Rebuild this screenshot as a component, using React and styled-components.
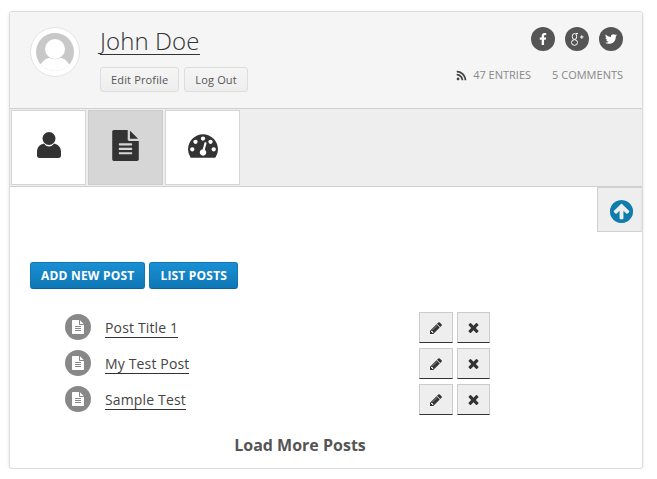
import React from "react";
import styled, { createGlobalStyle } from "styled-components";
import { FaFacebookF, FaTwitter, FaRss } from "react-icons/fa";

const ICONS = {
  file: "M1596 476q14 14 28 36h-472v-472q22 14 36 28zm-476 164h544v1056q0 40-28 68t-68 28h-1344q-40 0-68-28t-28-68v-1600q0-40 28-68t68-28h800v544q0 40 28 68t68 28zm160 736v-64q0-14-9-23t-23-9h-704q-14 0-23 9t-9 23v64q0 14 9 23t23 9h704q14 0 23-9t9-23zm0-256v-64q0-14-9-23t-23-9h-704q-14 0-23 9t-9 23v64q0 14 9 23t23 9h704q14 0 23-9t9-23zm0-256v-64q0-14-9-23t-23-9h-704q-14 0-23 9t-9 23v64q0 14 9 23t23 9h704q14 0 23-9t9-23z",
  gauge: "M384 1152q0-53-37.5-90.5t-90.5-37.5-90.5 37.5-37.5 90.5 37.5 90.5 90.5 37.5 90.5-37.5 37.5-90.5zm192-448q0-53-37.5-90.5t-90.5-37.5-90.5 37.5-37.5 90.5 37.5 90.5 90.5 37.5 90.5-37.5 37.5-90.5zm428 481l101-382q6-26-7.5-48.5t-38.5-29.5-48 6.5-30 39.5l-101 382q-60 5-107 43.5t-63 98.5q-20 77 20 146t117 89 146-20 89-117q16-60-6-117t-72-91zm660-33q0-53-37.5-90.5t-90.5-37.5-90.5 37.5-37.5 90.5 37.5 90.5 90.5 37.5 90.5-37.5 37.5-90.5zm-640-640q0-53-37.5-90.5t-90.5-37.5-90.5 37.5-37.5 90.5 37.5 90.5 90.5 37.5 90.5-37.5 37.5-90.5zm448 192q0-53-37.5-90.5t-90.5-37.5-90.5 37.5-37.5 90.5 37.5 90.5 90.5 37.5 90.5-37.5 37.5-90.5zm320 448q0 261-141 483-19 29-54 29h-1402q-35 0-54-29-141-221-141-483 0-182 71-348t191-286 286-191 348-71 348 71 286 191 191 286 71 348z",
  pencil: "M491 1536l91-91-235-235-91 91v107h128v128h107zm523-928q0-22-22-22-10 0-17 7l-542 542q-7 7-7 17 0 22 22 22 10 0 17-7l542-542q7-7 7-17zm-54-192l416 416-832 832h-416v-416zm683 96q0 53-37 90l-166 166-416-416 166-165q36-38 90-38 53 0 91 38l235 234q37 39 37 91z",
  times: "M1490 1322q0 40-28 68l-136 136q-28 28-68 28t-68-28l-294-294-294 294q-28 28-68 28t-68-28l-136-136q-28-28-28-68t28-68l294-294-294-294q-28-28-28-68t28-68l136-136q28-28 68-28t68 28l294 294 294-294q28-28 68-28t68 28l136 136q28 28 28 68t-28 68l-294 294 294 294q28 28 28 68z",
  up: "M1412 897q0-27-18-45l-362-362-91-91q-18-18-45-18t-45 18l-91 91-362 362q-18 18-18 45t18 45l91 91q18 18 45 18t45-18l189-189v502q0 26 19 45t45 19h128q26 0 45-19t19-45v-502l189 189q19 19 45 19t45-19l91-91q18-18 18-45zm252-1q0 209-103 385.5t-279.5 279.5-385.5 103-385.5-103-279.5-279.5-103-385.5 103-385.5 279.5-279.5 385.5-103 385.5 103 279.5 279.5 103 385.5z",
};

const Global = createGlobalStyle`
  html, body {
    margin: 0;
    background: #fff;
    font-family: "Open Sans", sans-serif;
    color: #444;
  }
`;

const Card = styled.div`
  width: 634px;
  height: 458px;
  margin: 11px 0 0 9px;
  box-sizing: border-box;
  border: 1px solid #dcdcdc;
  border-radius: 3px;
  box-shadow: 0 1px 3px rgba(0, 0, 0, 0.12);
  overflow: hidden;
`;

const Header = styled.header`
  height: 97px;
  box-sizing: border-box;
  background: #f5f5f5;
  border-bottom: 1px solid #d0d0d0;
  padding: 15px 19px 0 20px;
  display: flex;
`;

const Avatar = styled.svg`
  width: 50px;
  height: 50px;
  margin-right: 20px;
  flex: none;
`;

const Identity = styled.div`
  display: flex;
  flex-direction: column;
  align-items: flex-start;
`;

const Name = styled.h1`
  margin: 0;
  font-size: 24px;
  font-weight: 300;
  line-height: 27px;
  letter-spacing: 0.1px;
  color: #333;
  border-bottom: 1px solid #333;
`;

const ProfileButtons = styled.div`
  display: flex;
  gap: 5px;
  margin-top: 12px;
`;

const ProfileButton = styled.button`
  height: 25px;
  padding: 0 10px;
  font: 400 11px "Open Sans", sans-serif;
  letter-spacing: 0.15px;
  color: #555;
  background: linear-gradient(#f5f5f5, #eee);
  border: 1px solid #ddd;
  border-radius: 3px;
`;

const Meta = styled.div`
  margin-left: auto;
  display: flex;
  flex-direction: column;
  align-items: flex-end;
`;

const Socials = styled.div`
  display: flex;
  gap: 10px;
`;

const Social = styled.span`
  width: 24px;
  height: 24px;
  border-radius: 50%;
  background: #555;
  color: #fff;
  display: flex;
  align-items: center;
  justify-content: center;
  font-size: 12px;
`;

const GooglePlus = styled.svg`
  width: 15px;
  height: 15px;
  fill: none;
  stroke: #fff;
  stroke-width: 1;
`;

const Stats = styled.div`
  display: flex;
  gap: 21px;
  margin-top: 17px;
  font-size: 11px;
  line-height: 14px;
  color: #888;
`;

const Stat = styled.span`
  display: flex;
  align-items: center;
  gap: 6px;
  svg {
    color: #444;
    font-size: 11px;
  }
`;

const TabBar = styled.nav`
  height: 78px;
  box-sizing: border-box;
  background: #eee;
  border-bottom: 1px solid #d0d0d0;
  padding: 1px 0 0 1px;
  display: flex;
  gap: 2px;
`;

const Tab = styled.div`
  width: 75px;
  height: 75px;
  box-sizing: border-box;
  padding-bottom: 5px;
  border: 1px solid ${(p) => (p.$active ? "#ccc" : "#d5d5d5")};
  background: ${(p) => (p.$active ? "#d6d6d6" : "#fff")};
  display: flex;
  align-items: center;
  justify-content: center;
`;

const Glyph = styled.svg`
  width: ${(p) => p.$size}px;
  height: ${(p) => p.$size}px;
  fill: ${(p) => p.$color || "#333"};
  display: block;
`;

const UserGlyph = styled.svg`
  width: 24px;
  height: 26px;
  fill: #333;
  display: block;
`;

const Content = styled.main`
  display: flex;
  flex-direction: column;
`;

const TopRow = styled.div`
  display: flex;
  justify-content: flex-end;
`;

const TopButton = styled.button`
  width: 45px;
  height: 45px;
  padding: 4px 0 0 3px;
  background: #eee;
  border: 1px solid #d0d0d0;
  border-right-color: #e4e4e4;
  display: flex;
  align-items: center;
  justify-content: center;
`;

const Actions = styled.div`
  display: flex;
  gap: 4px;
  margin: 30px 0 0 20px;
`;

const PrimaryButton = styled.button`
  height: 27px;
  padding: 0 10px;
  font: 700 12px "Open Sans", sans-serif;
  letter-spacing: 0.2px;
  color: #fff;
  background: linear-gradient(#1a8fd4, #0f77b5);
  border: 1px solid #0f77b5;
  border-bottom-color: #0b639a;
  border-radius: 3px;
`;

const PostList = styled.ul`
  list-style: none;
  width: 425px;
  margin: 22px 0 0 55px;
  padding: 0;
  display: flex;
  flex-direction: column;
  gap: 4px;
`;

const PostRow = styled.li`
  height: 32px;
  display: flex;
  align-items: center;
`;

const PostIcon = styled.span`
  width: 26px;
  height: 26px;
  border-radius: 50%;
  background: #888;
  display: flex;
  align-items: center;
  justify-content: center;
  margin-right: 14px;
`;

const PostTitle = styled.a`
  margin-top: 2px;
  font-size: 14px;
  line-height: 18px;
  letter-spacing: 0.15px;
  color: #444;
  border-bottom: 1px solid #333;
`;

const RowTools = styled.div`
  margin-left: auto;
  align-self: flex-end;
  display: flex;
  gap: 4px;
`;

const ToolButton = styled.button`
  width: ${(p) => p.$width}px;
  height: 31px;
  padding: 0;
  background: #eee;
  border: 1px solid #ccc;
  border-bottom: 1px solid #333;
  display: flex;
  align-items: center;
  justify-content: center;
`;

const LoadMore = styled.div`
  width: 540px;
  margin: 19px 0 0 20px;
  text-align: center;
  font-size: 16px;
  font-weight: 700;
  line-height: 22px;
  color: #555;
`;

function Icon({ name, size, color }) {
  return (
    <Glyph viewBox="0 0 1792 1792" $size={size} $color={color}>
      <path d={ICONS[name]} />
    </Glyph>
  );
}

const POSTS = ["Post Title 1", "My Test Post", "Sample Test"];

export default function App() {
  return (
    <>
      <Global />
      <Card>
        <Header>
          <Avatar viewBox="0 0 50 50">
            <circle cx="25" cy="25" r="24.5" fill="#fff" stroke="#e2e2e2" />
            <circle cx="25" cy="25" r="19" fill="#c8c8c8" />
            <clipPath id="face">
              <circle cx="25" cy="25" r="19" />
            </clipPath>
            <g clipPath="url(#face)" fill="#fff">
              <ellipse cx="25" cy="22" rx="10" ry="10" />
              <path d="M8 46c1-9 6-14 11-15 4 1.500 8 1.500 12 0 5 1 10 6 11 15z" />
            </g>
          </Avatar>
          <Identity>
            <Name>John Doe</Name>
            <ProfileButtons>
              <ProfileButton>Edit Profile</ProfileButton>
              <ProfileButton>Log Out</ProfileButton>
            </ProfileButtons>
          </Identity>
          <Meta>
            <Socials>
              <Social><FaFacebookF /></Social>
              <Social>
                <GooglePlus viewBox="0 0 15 15">
                  <ellipse cx="4.500" cy="4.500" rx="2.200" ry="3" />
                  <ellipse cx="4.500" cy="10.500" rx="3" ry="2.800" />
                  <path d="M6 1.500h2M10 5h3.500M11.800 3.300v3.500" />
                </GooglePlus>
              </Social>
              <Social><FaTwitter /></Social>
            </Socials>
            <Stats>
              <Stat><FaRss />47 ENTRIES</Stat>
              <Stat>5 COMMENTS</Stat>
            </Stats>
          </Meta>
        </Header>
        <TabBar>
          <Tab>
            <UserGlyph viewBox="0 0 24 26">
              <circle cx="12" cy="6.500" r="6.500" />
              <path d="M7 11.500c1.200 2 3 3 5 3s3.800-1 5-3c4 .8 7 3.500 7 8.500v3.500c0 1.500-1 2.500-2.500 2.500h-19C1 26 0 25 0 23.500V20c0-5 3-7.700 7-8.500z" />
            </UserGlyph>
          </Tab>
          <Tab $active><Icon name="file" size={31} /></Tab>
          <Tab><Icon name="gauge" size={30} /></Tab>
        </TabBar>
        <Content>
          <TopRow>
            <TopButton><Icon name="up" size={27} color="#0f7cab" /></TopButton>
          </TopRow>
          <Actions>
            <PrimaryButton>ADD NEW POST</PrimaryButton>
            <PrimaryButton>LIST POSTS</PrimaryButton>
          </Actions>
          <PostList>
            {POSTS.map((title) => (
              <PostRow key={title}>
                <PostIcon><Icon name="file" size={14} color="#fff" /></PostIcon>
                <PostTitle>{title}</PostTitle>
                <RowTools>
                  <ToolButton $width={34}><Icon name="pencil" size={14} /></ToolButton>
                  <ToolButton $width={33}><Icon name="times" size={15} /></ToolButton>
                </RowTools>
              </PostRow>
            ))}
          </PostList>
          <LoadMore>Load More Posts</LoadMore>
        </Content>
      </Card>
    </>
  );
}
